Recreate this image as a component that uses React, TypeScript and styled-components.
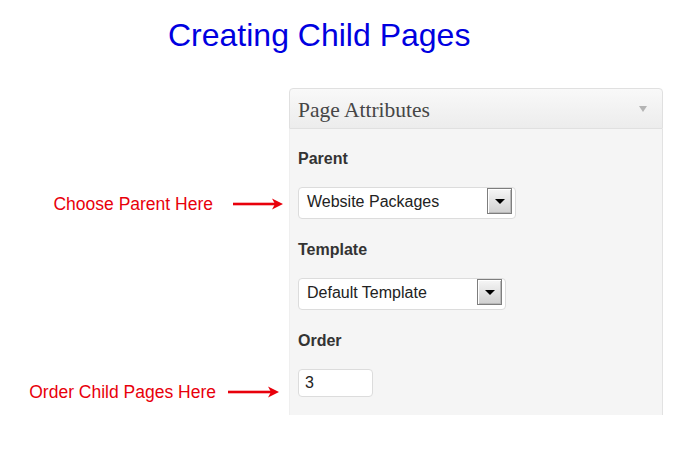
import React from "react";
import styled, { createGlobalStyle } from "styled-components";

const GlobalStyle = createGlobalStyle`
  html, body { margin: 0; padding: 0; background: #ffffff; }
  body { font-family: "Liberation Sans", Arial, sans-serif; }
  * { box-sizing: border-box; }
`;

const Page = styled.div`
  width: 674px;
  height: 469px;
  background: #ffffff;
`;

const Title = styled.h1`
  margin: 0;
  padding: 17px 0 0 168px;
  font: normal 32px/37px "Liberation Sans", Arial, sans-serif;
  color: #0000e0;
`;

const Board = styled.div`
  margin-top: 34px;
  display: flex;
  flex-direction: column;
`;

const Row = styled.div`
  display: grid;
  grid-template-columns: 289px 374px;
`;

const Callout = styled.div<{ $gap: number; $right: number }>`
  display: flex;
  align-items: center;
  justify-content: flex-end;
  gap: ${(p) => p.$gap}px;
  padding-right: ${(p) => p.$right}px;
`;

const CalloutText = styled.span`
  font: 17.5px/20px "Liberation Sans", Arial, sans-serif;
  color: #e8000b;
  white-space: nowrap;
`;

const Header = styled.div`
  grid-column: 2;
  height: 41px;
  display: flex;
  align-items: center;
  justify-content: space-between;
  padding: 2px 15px 0 8px;
  border: 1px solid #e0e0e0;
  border-radius: 4px 4px 0 0;
  background: linear-gradient(#f9f9f9, #ececec);
`;

const HeaderTitle = styled.span`
  font: 21.5px/24px "Liberation Serif", Georgia, serif;
  color: #464646;
`;

const Collapse = styled.span`
  width: 0;
  height: 0;
  margin-top: -1px;
  border-left: 4px solid transparent;
  border-right: 4px solid transparent;
  border-top: 6px solid #b4b4b4;
`;

const PanelCell = styled.div<{ $pad?: string }>`
  grid-column: 2;
  background: #f5f5f5;
  border-left: 1px solid #efefef;
  border-right: 1px solid #e2e2e2;
  padding: ${(p) => p.$pad ?? "0 8px"};
  display: flex;
  align-items: center;
`;

const Label = styled.span`
  font: bold 16px/18px "Liberation Sans", Arial, sans-serif;
  color: #333333;
`;

const SelectBox = styled.div<{ $w: number }>`
  width: ${(p) => p.$w}px;
  height: 32px;
  display: flex;
  align-items: center;
  padding: 0 3px 0 8px;
  background: #ffffff;
  border: 1px solid #dcdcdc;
  border-radius: 4px;
  font: 16px/20px "Liberation Sans", Arial, sans-serif;
  color: #222222;
`;

const SelectValue = styled.span`
  flex: 1;
  margin-top: -3px;
`;

const DropButton = styled.span`
  width: 25px;
  height: 26px;
  align-self: flex-start;
  display: flex;
  align-items: center;
  justify-content: center;
  border: 1px solid #7e7e7e;
  box-shadow: inset 1px 1px 0 #ffffff, inset -1px -1px 0 #b8b8b8;
  background: linear-gradient(#f6f6f6, #d0d0d0);
  &::after {
    content: "";
    width: 0;
    height: 0;
    border-left: 5px solid transparent;
    border-right: 5px solid transparent;
    border-top: 5px solid #000000;
  }
`;

const NumberBox = styled.div`
  width: 75px;
  height: 28px;
  display: flex;
  align-items: center;
  padding-left: 6px;
  background: #ffffff;
  border: 1px solid #dcdcdc;
  border-radius: 4px;
  font: 16px/20px "Liberation Sans", Arial, sans-serif;
  color: #222222;
`;

const Arrow = ({ width }: { width: number }) => (
  <svg width={width} height={12} viewBox={`0 0 ${width} 12`}>
    <rect x={0} y={4.7} width={width - 8} height={2.6} fill="#e8000b" />
    <polygon points={`${width - 11},0.5 ${width},6 ${width - 11},11.5 ${width - 8},6`} fill="#e8000b" />
  </svg>
);

const LabelRow = ({ text }: { text: string }) => (
  <Row>
    <PanelCell $pad="21px 8px 19px">
      <Label>{text}</Label>
    </PanelCell>
  </Row>
);

export default function App() {
  return (
    <Page>
      <GlobalStyle />
      <Title>Creating Child Pages</Title>
      <Board>
        <Row>
          <Header>
            <HeaderTitle>Page Attributes</HeaderTitle>
            <Collapse />
          </Header>
        </Row>

        <LabelRow text="Parent" />
        <Row>
          <Callout $gap={20} $right={6}>
            <CalloutText>Choose Parent Here</CalloutText>
            <Arrow width={50} />
          </Callout>
          <PanelCell $pad="0 8px 1px">
            <SelectBox $w={218}>
              <SelectValue>Website Packages</SelectValue>
              <DropButton />
            </SelectBox>
          </PanelCell>
        </Row>

        <LabelRow text="Template" />
        <Row>
          <div />
          <PanelCell $pad="0 8px 1px">
            <SelectBox $w={208}>
              <SelectValue>Default Template</SelectValue>
              <DropButton />
            </SelectBox>
          </PanelCell>
        </Row>

        <LabelRow text="Order" />
        <Row>
          <Callout $gap={12} $right={10}>
            <CalloutText>Order Child Pages Here</CalloutText>
            <Arrow width={51} />
          </Callout>
          <PanelCell $pad="0 8px 18px">
            <NumberBox>3</NumberBox>
          </PanelCell>
        </Row>
      </Board>
    </Page>
  );
}
